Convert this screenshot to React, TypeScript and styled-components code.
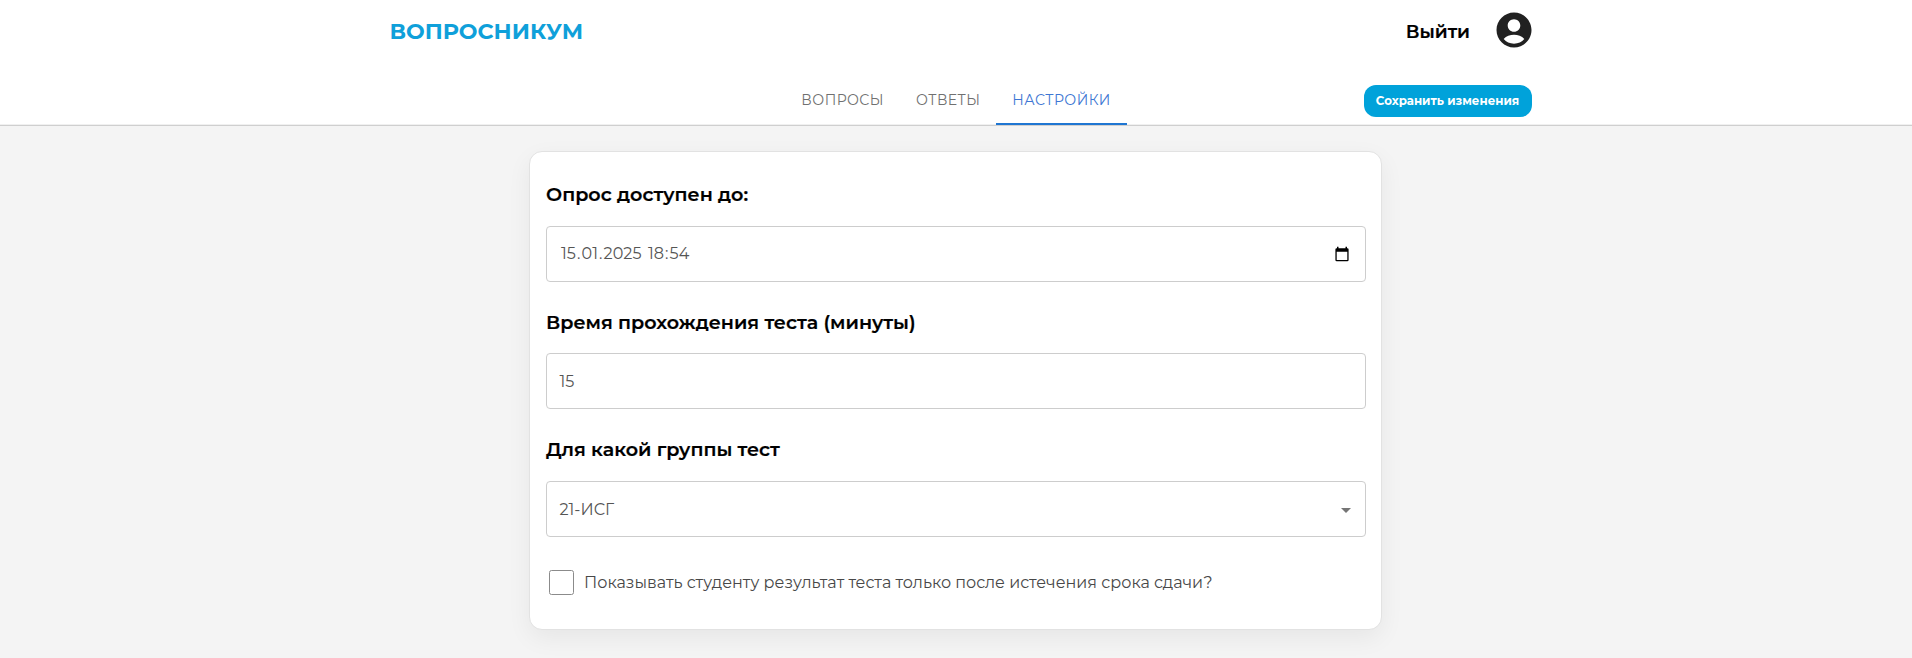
import React, { useState } from "react";
import styled, { createGlobalStyle } from "styled-components";

const GlobalStyle = createGlobalStyle`
  *, *::before, *::after { box-sizing: border-box; }
  body {
    margin: 0;
    background: #f4f4f4;
    color: #000;
    font-family: Montserrat, Inter, "Liberation Sans", sans-serif;
  }
  button, input { font-family: inherit; }
`;

const Page = styled.div`
  min-height: 658px;
  overflow: hidden;
`;

const Header = styled.header`
  height: 126px;
  background: #fff;
  border-bottom: 1px solid #cfcfcf;
  box-shadow: inset 0 -1px 0 #f0f0f0;
`;

const Container = styled.div`
  width: 1151px;
  margin: 0 auto;
`;

const TopBar = styled(Container)`
  display: flex;
  align-items: center;
  height: 60px;
  padding-left: 9px;
`;

const Logo = styled.a`
  margin-right: auto;
  padding-top: 4px;
  color: #0fa0da;
  font-size: 22.2px;
  font-weight: 700;
  line-height: 26px;
`;

const Logout = styled.a`
  margin-right: 22.5px;
  padding-top: 4px;
  font-size: 18.4px;
  font-weight: 600;
  line-height: 22px;
  -webkit-text-stroke: 0.2px currentColor;
`;

const Avatar = styled.svg`
  width: 42px;
  height: 42px;
  margin-right: -3px;
  fill: #212121;
`;

const NavBar = styled(Container)`
  display: grid;
  grid-template-columns: 1fr auto 1fr;
  height: 65px;
  padding-top: 16px;
`;

const Tabs = styled.nav`
  display: flex;
  grid-column: 2;
`;

const Tab = styled.button<{ $active?: boolean }>`
  height: 49px;
  padding: 0 16px;
  border: 0;
  border-bottom: 2px solid ${(p) => (p.$active ? "#1f76d2" : "transparent")};
  background: none;
  color: ${(p) => (p.$active ? "#3d76d3" : "#707070")};
  font-size: 14px;
  font-weight: 400;
  line-height: 18px;
  letter-spacing: 0.45px;
`;

const SaveButton = styled.button`
  grid-column: 3;
  justify-self: end;
  width: 168px;
  height: 32px;
  margin-top: 9px;
  padding: 0;
  border: 0;
  border-radius: 12px;
  background: #00a2da;
  color: #fff;
  font-size: 11.8px;
  font-weight: 700;
`;

const Body = styled.div`
  padding-right: 1px;
`;

const Card = styled.main`
  width: 853px;
  height: 479px;
  margin: 25px auto 0;
  padding: 0 15px 0 16px;
  border: 1px solid #e2e2e2;
  border-radius: 13px;
  background: #fff;
  box-shadow: 0 8px 24px rgba(0, 0, 0, 0.06);
`;

const Field = styled.section<{ $height: number }>`
  display: flex;
  flex-direction: column;
  justify-content: space-between;
  height: ${(p) => p.$height}px;
  padding-top: 29px;
  &:first-child { padding-top: 31px; }
`;

const Title = styled.h2`
  margin: 0;
  font-size: 19.1px;
  font-weight: 600;
  line-height: 24px;
  -webkit-text-stroke: 0.2px currentColor;
`;

const Control = styled.div`
  display: flex;
  flex-shrink: 0;
  align-items: center;
  justify-content: space-between;
  height: 56px;
  padding: 1px 13px 0 12.5px;
  border: 1px solid #cdcdcd;
  border-radius: 4px;
  color: #555;
  font-size: 16px;
`;

const DateControl = styled(Control)`
  padding: 0 13px 1px;
`;

const DateValue = styled.span`
  white-space: pre;
  letter-spacing: 0.08px;
`;

const DatePart = styled.span`
  padding: 0 1px;
`;

const CalendarIcon = styled.svg`
  width: 16px;
  height: 16px;
  margin-right: 2px;
`;

const ArrowIcon = styled.svg`
  width: 24px;
  height: 24px;
  margin-right: -6px;
  fill: #757575;
`;

const CheckRow = styled.label`
  display: flex;
  align-items: center;
  gap: 10px;
  height: 26px;
  margin: 32px 0 0 3px;
  color: #484848;
  font-size: 16px;
`;

const Checkbox = styled.input`
  appearance: none;
  width: 25px;
  height: 25px;
  margin: 0;
  border: 1px solid #8b8b8b;
  border-radius: 2.5px;
  background: #fff;
  &:checked { background: #00a2da; }
`;

const tabs = ["ВОПРОСЫ", "ОТВЕТЫ", "НАСТРОЙКИ"];

export default function App() {
  const [active, setActive] = useState(2);
  return (
    <Page>
      <GlobalStyle />
      <Header>
        <TopBar>
          <Logo>ВОПРОСНИКУМ</Logo>
          <Logout>Выйти</Logout>
          <Avatar viewBox="0 0 24 24">
            <path d="M12 2C6.48 2 2 6.48 2 12s4.48 10 10 10 10-4.48 10-10S17.52 2 12 2zm0 3.8c2 0 3.6 1.6 3.6 3.6S14 13 12 13s-3.6-1.6-3.6-3.6S10 5.8 12 5.8zm0 14c-2.4 0-4.5-.8-5.9-2.6C7.6 15.3 9.7 14.7 12 14.7s4.4.6 5.9 2.5c-1.4 1.8-3.5 2.6-5.9 2.6z" />
          </Avatar>
        </TopBar>
        <NavBar>
          <Tabs>
            {tabs.map((label, i) => (
              <Tab key={label} $active={i === active} onClick={() => setActive(i)}>
                {label}
              </Tab>
            ))}
          </Tabs>
          <SaveButton>Сохранить изменения</SaveButton>
        </NavBar>
      </Header>
      <Body>
        <Card>
          <Field $height={130}>
            <Title>Опрос доступен до:</Title>
            <DateControl>
              <DateValue>
                <DatePart>15</DatePart>.<DatePart>01</DatePart>.<DatePart>2025</DatePart>{" "}
                <DatePart>18</DatePart>:<DatePart>54</DatePart>
              </DateValue>
              <CalendarIcon viewBox="0 0 16 16">
                <path d="M3 .8h1.5v1.5h7V.8H13v1.5h.3a1.3 1.3 0 0 1 1.3 1.3v10.3a1.3 1.3 0 0 1-1.3 1.3H2.7a1.3 1.3 0 0 1-1.3-1.3V3.6a1.3 1.3 0 0 1 1.3-1.3H3zM2.7 5.7v8.2h10.600V5.7z" fillRule="evenodd" />
              </CalendarIcon>
            </DateControl>
          </Field>
          <Field $height={127}>
            <Title>Время прохождения теста (минуты)</Title>
            <Control>15</Control>
          </Field>
          <Field $height={128}>
            <Title>Для какой группы тест</Title>
            <Control>
              21-ИСГ
              <ArrowIcon viewBox="0 0 24 24">
                <path d="M7 10l5 5 5-5z" />
              </ArrowIcon>
            </Control>
          </Field>
          <CheckRow>
            <Checkbox type="checkbox" />
            Показывать студенту результат теста только после истечения срока сдачи?
          </CheckRow>
        </Card>
      </Body>
    </Page>
  );
}
